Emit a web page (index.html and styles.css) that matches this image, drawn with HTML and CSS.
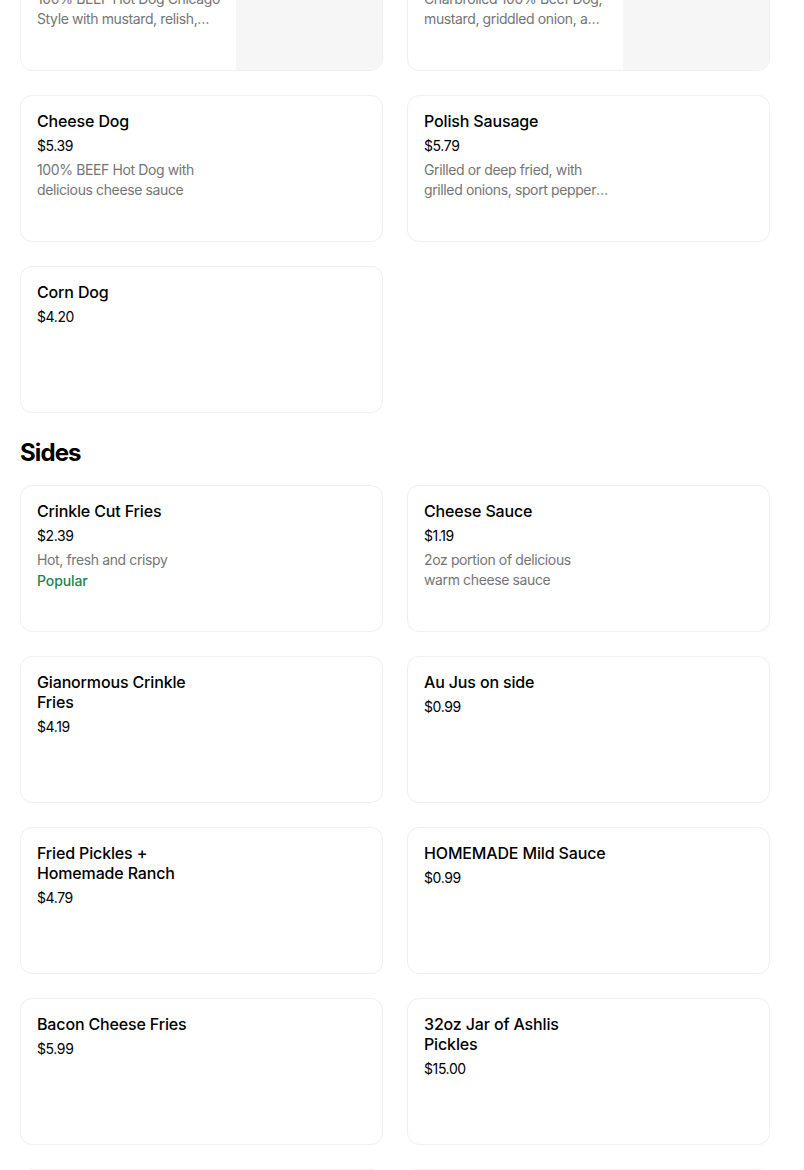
FILE: index.html
```html
<!DOCTYPE html>
<html>
<head>
<meta charset="utf-8">
<link rel="stylesheet" href="styles.css">
</head>
<body>
<main class="menu">
  <section class="section section-first">
    <div class="grid">
      <div class="card">
        <div class="info">
          <div class="title">Chicago Dog</div>
          <div class="price">$4.99</div>
          <div class="desc">100% BEEF Hot Dog Chicago Style with mustard, relish, onion, tomato, pickle, sport peppers and celery salt</div>
        </div>
        <div class="thumb"></div>
      </div>
      <div class="card">
        <div class="info">
          <div class="title">Charbroiled Dog</div>
          <div class="price">$5.19</div>
          <div class="desc">Charbroiled 100% Beef Dog, mustard, griddled onion, and cheese sauce</div>
        </div>
        <div class="thumb"></div>
      </div>
      <div class="card">
        <div class="info">
          <div class="title">Cheese Dog</div>
          <div class="price">$5.39</div>
          <div class="desc">100% BEEF Hot Dog with delicious cheese sauce</div>
        </div>
      </div>
      <div class="card">
        <div class="info">
          <div class="title">Polish Sausage</div>
          <div class="price">$5.79</div>
          <div class="desc">Grilled or deep fried, with grilled onions, sport peppers and mustard</div>
        </div>
      </div>
      <div class="card">
        <div class="info">
          <div class="title">Corn Dog</div>
          <div class="price">$4.20</div>
        </div>
      </div>
    </div>
  </section>

  <section class="section">
    <h2 class="heading">Sides</h2>
    <div class="grid">
      <div class="card">
        <div class="info">
          <div class="title">Crinkle Cut Fries</div>
          <div class="price">$2.39</div>
          <div class="desc">Hot, fresh and crispy</div>
          <div class="popular">Popular</div>
        </div>
      </div>
      <div class="card">
        <div class="info">
          <div class="title">Cheese Sauce</div>
          <div class="price">$1.19</div>
          <div class="desc">2oz portion of delicious warm cheese sauce</div>
        </div>
      </div>
      <div class="card">
        <div class="info">
          <div class="title">Gianormous Crinkle Fries</div>
          <div class="price">$4.19</div>
        </div>
      </div>
      <div class="card">
        <div class="info">
          <div class="title">Au Jus on side</div>
          <div class="price">$0.99</div>
        </div>
      </div>
      <div class="card">
        <div class="info">
          <div class="title">Fried Pickles + Homemade Ranch</div>
          <div class="price">$4.79</div>
        </div>
      </div>
      <div class="card">
        <div class="info">
          <div class="title">HOMEMADE Mild Sauce</div>
          <div class="price">$0.99</div>
        </div>
      </div>
      <div class="card">
        <div class="info">
          <div class="title">Bacon Cheese Fries</div>
          <div class="price">$5.99</div>
        </div>
      </div>
      <div class="card">
        <div class="info">
          <div class="title">32oz Jar of Ashlis Pickles</div>
          <div class="price">$15.00</div>
        </div>
      </div>
      <div class="card">
        <div class="info">
          <div class="title">Onion Rings</div>
          <div class="price">$3.99</div>
        </div>
      </div>
      <div class="card">
        <div class="info">
          <div class="title">Side Salad</div>
          <div class="price">$3.49</div>
        </div>
      </div>
    </div>
  </section>
</main>
</body>
</html>
```

FILE: styles.css
```css
* { box-sizing: border-box; }

html, body {
  margin: 0;
  padding: 0;
  background: #ffffff;
  overflow: hidden;
}

body {
  font-family: "Inter", "Liberation Sans", Arial, sans-serif;
  color: #000000;
  -webkit-font-smoothing: antialiased;
}

.menu {
  width: 750px;
  margin-left: 20px;
}

.section-first {
  margin-top: -76px;
}

.heading {
  margin: 24px 0 16px;
  font-size: 24px;
  line-height: 32px;
  font-weight: 700;
  letter-spacing: -0.9px;
}

.grid {
  display: grid;
  grid-template-columns: 363px 363px;
  gap: 24px;
}

.card {
  display: flex;
  height: 147px;
  border: 1px solid #efefef;
  border-radius: 12px;
  overflow: hidden;
  background: #fff;
}

.info {
  flex: 1;
  padding: 15px 14px 16px 16px;
  min-width: 0;
  max-width: 217px;
}

.thumb {
  width: 146px;
  margin-left: auto;
  background: #f6f6f6;
}

.title {
  font-size: 16px;
  line-height: 20px;
  font-weight: 500;
  color: #000;
  letter-spacing: -0.15px;
}

.price {
  margin-top: 5px;
  font-size: 14px;
  line-height: 20px;
  font-weight: 400;
  color: #000;
  letter-spacing: -0.4px;
}

.desc {
  margin-top: 4px;
  margin-right: 2px;
  font-size: 14px;
  line-height: 20px;
  color: #757575;
  letter-spacing: -0.38px;
  display: -webkit-box;
  -webkit-line-clamp: 2;
  -webkit-box-orient: vertical;
  overflow: hidden;
}

.popular {
  margin-top: 1px;
  font-size: 14px;
  line-height: 20px;
  font-weight: 500;
  color: #24844c;
  letter-spacing: -0.1px;
}
```
